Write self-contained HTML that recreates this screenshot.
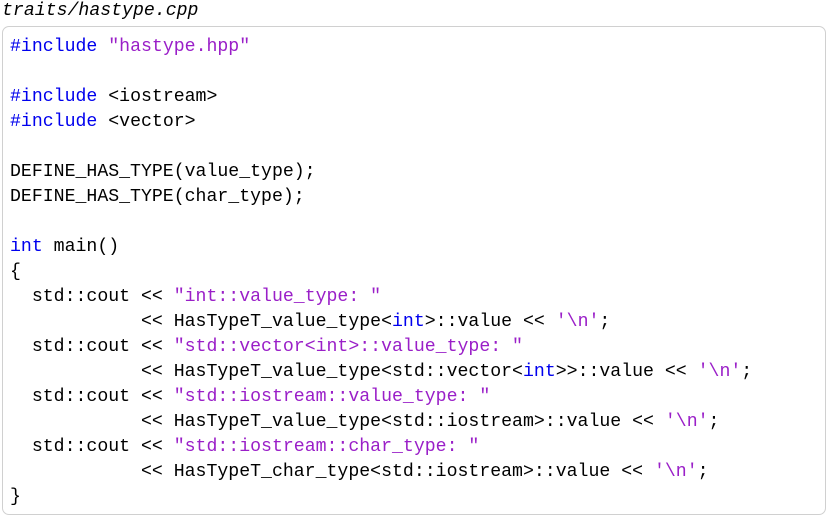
<!DOCTYPE html>
<html><head><meta charset="utf-8"><style>
html,body{margin:0;padding:0;background:#fff;width:828px;height:517px;overflow:hidden}
.t{position:absolute;left:2px;top:-1px;font:italic 18.2px/25px "Liberation Mono",monospace;color:#000}
.box{position:absolute;left:2px;top:26px;width:822px;height:487px;border:1px solid #d0d0d0;border-radius:7px}
pre{position:absolute;left:10px;top:35px;margin:0;font:18.2px/25px "Liberation Mono",monospace;color:#000}
.k{color:#0000ee}.s{color:#9a1fc8}
</style></head><body>
<div class="t">traits/hastype.cpp</div>
<div class="box"></div>
<pre><span class="k">#include</span> <span class="s">"hastype.hpp"</span>

<span class="k">#include</span> &lt;iostream&gt;
<span class="k">#include</span> &lt;vector&gt;

DEFINE_HAS_TYPE(value_type);
DEFINE_HAS_TYPE(char_type);

<span class="k">int</span> main()
{
  std::cout &lt;&lt; <span class="s">"int::value_type: "</span>
            &lt;&lt; HasTypeT_value_type&lt;<span class="k">int</span>&gt;::value &lt;&lt; <span class="s">'\n'</span>;
  std::cout &lt;&lt; <span class="s">"std::vector&lt;int&gt;::value_type: "</span>
            &lt;&lt; HasTypeT_value_type&lt;std::vector&lt;<span class="k">int</span>&gt;&gt;::value &lt;&lt; <span class="s">'\n'</span>;
  std::cout &lt;&lt; <span class="s">"std::iostream::value_type: "</span>
            &lt;&lt; HasTypeT_value_type&lt;std::iostream&gt;::value &lt;&lt; <span class="s">'\n'</span>;
  std::cout &lt;&lt; <span class="s">"std::iostream::char_type: "</span>
            &lt;&lt; HasTypeT_char_type&lt;std::iostream&gt;::value &lt;&lt; <span class="s">'\n'</span>;
}</pre>
</body></html>
